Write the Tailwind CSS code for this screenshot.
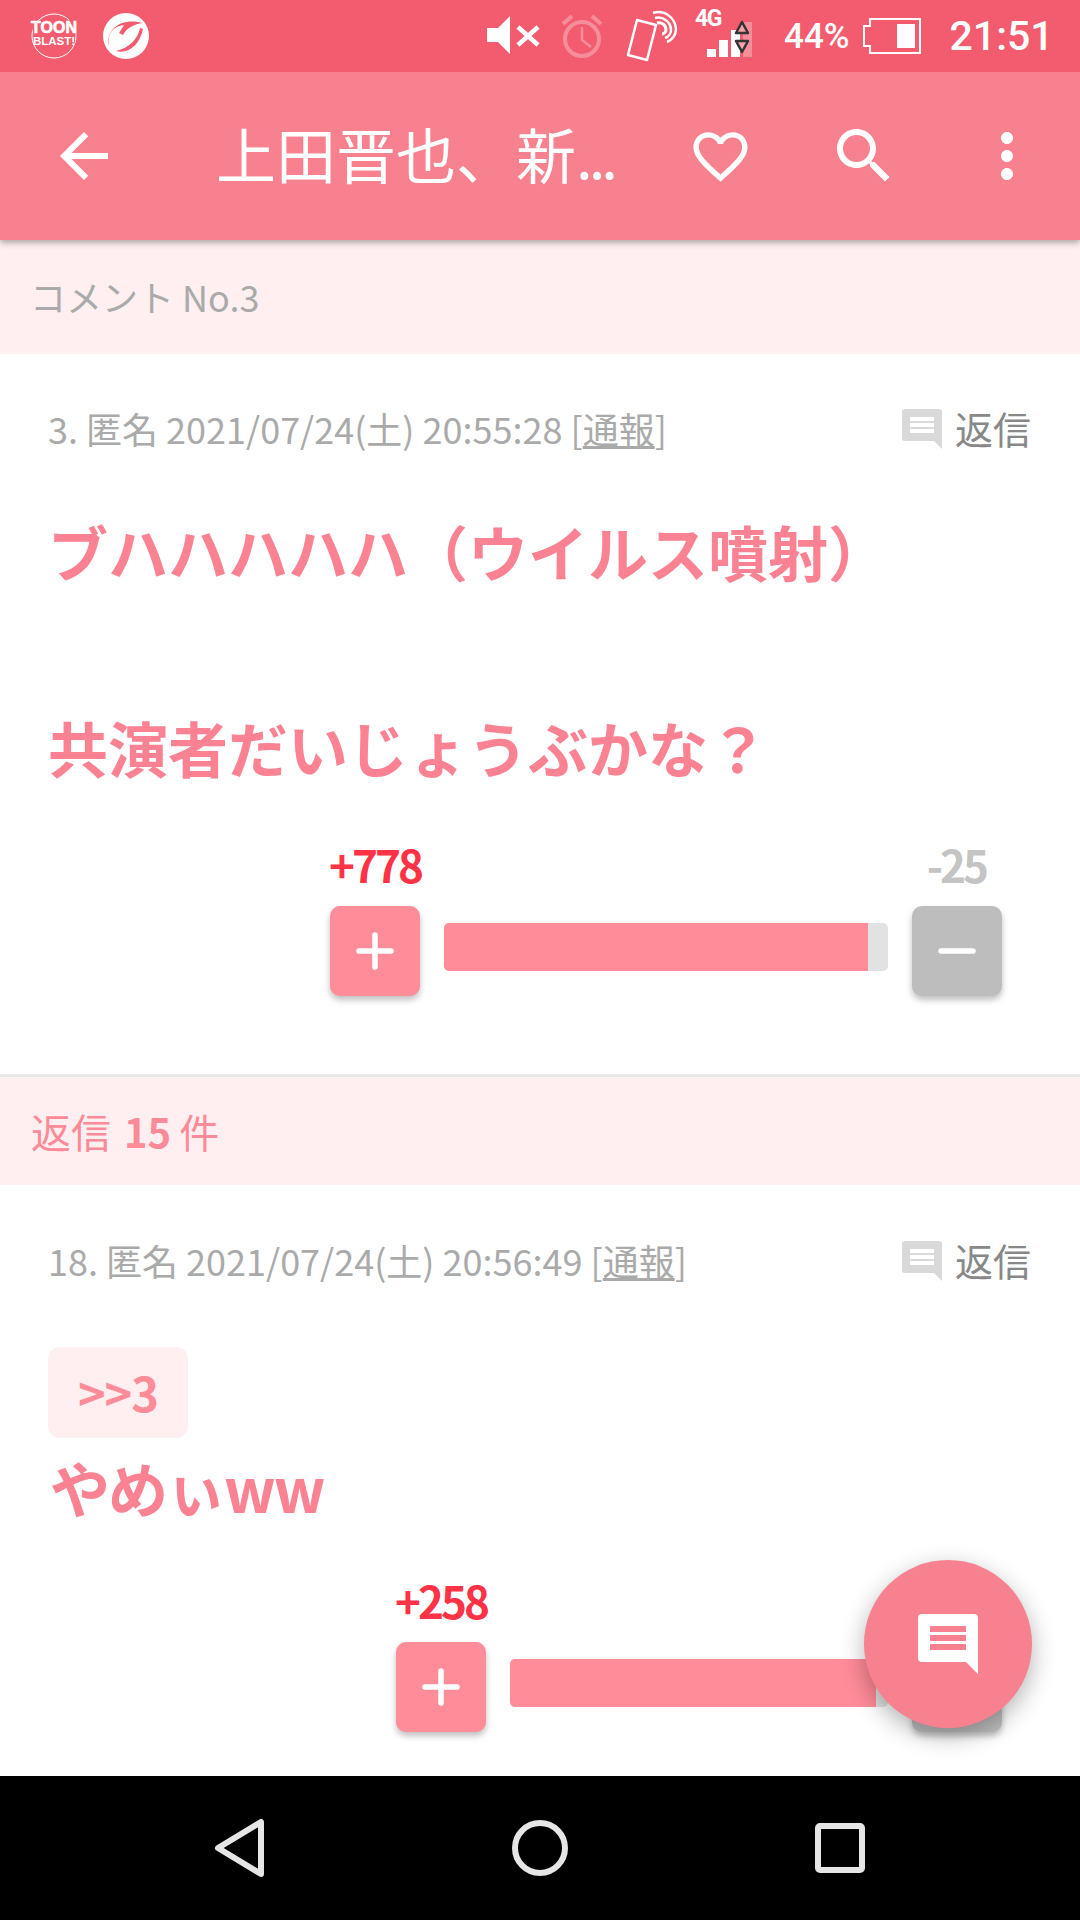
<!DOCTYPE html>
<html lang="ja">
<head>
<meta charset="utf-8">
<script src="https://cdn.jsdelivr.net/npm/@tailwindcss/browser@4"></script>
</head>
<body class="bg-white">
<div class="relative w-[1080px] h-[1920px] overflow-hidden flex flex-col bg-white font-['Noto_Sans_CJK_JP','Noto_Sans',sans-serif]">
  <!-- status bar -->
  <div class="h-[72px] shrink-0 bg-[#f25c6e] flex items-center text-white relative z-20">
    <svg class="ml-[30px] w-[48px] h-[48px]" viewBox="0 0 48 48"><circle cx="24" cy="24" r="22" fill="none" stroke="#fff" stroke-width="1"/><path d="M1 9 L46 8 L45 27 L44 33 L5 33 L3 20Z" fill="#f25c6e"/><text x="24" y="21" text-anchor="middle" font-family="Liberation Sans" font-weight="700" font-size="16" stroke="#fff" stroke-width="0.6" fill="#fff">TOON</text><text x="24" y="33" text-anchor="middle" font-family="Liberation Sans" font-weight="700" font-size="11.5" fill="#fff">BLAST!</text></svg>
    <svg class="ml-[24px] w-[48px] h-[48px]" viewBox="0 0 48 48"><circle cx="24" cy="24" r="23" fill="#fff"/><path d="M7 34 C5 22 11 14 22 13 L17 21 L21 23 C24 17 31 12 41 11 C31 8 18 9 11 17 C7 22 5 28 7 34Z" fill="#f25c6e"/><path d="M14 39 C25 42 37 35 41 17 L38 16 C36 27 27 36 14 39Z" fill="#f25c6e"/></svg>
    <svg class="ml-[337px] w-[54px] h-[40px]" viewBox="0 0 54 40"><path d="M0 12 H11 L23 0 V38 L11 26 H0Z" fill="#fff"/><path d="M31 11 L51 29 M51 11 L31 29" stroke="#fff" stroke-width="4.5"/></svg>
    <svg class="ml-[20px] w-[42px] h-[44px] opacity-30" viewBox="0 0 42 44"><circle cx="21" cy="25" r="17" fill="none" stroke="#fff" stroke-width="4"/><path d="M21 13 V26 L30 33" fill="none" stroke="#fff" stroke-width="2.5"/><path d="M2 10 L11 2 M40 10 L31 2" stroke="#fff" stroke-width="4"/></svg>
    <svg class="ml-[23px] w-[52px] h-[52px]" viewBox="0 0 52 52"><path d="M11 10 L30 15 L21 50 L2 45Z" fill="none" stroke="#fff" stroke-width="2.5" stroke-linejoin="round"/><path d="M27 3 C39 -1 49 8 50 19 C50 25 46 30 41 32" fill="none" stroke="#fff" stroke-width="2.5"/><path d="M29 8 C37 6 45 12 45 20 C45 24 42 27 39 28" fill="none" stroke="#fff" stroke-width="2.5"/><path d="M31 13 C36 12 40 15 40 20 C40 22 38 24 36 24" fill="none" stroke="#fff" stroke-width="3"/></svg>
    <div class="relative ml-[17px] w-[58px] h-[44px] mt-[-2px]">
      <span class="absolute left-0 top-[-7px] font-['Roboto'] font-bold text-[23px] leading-[26px] tracking-[-1.5px]">4G</span>
      <div class="absolute left-[12px] bottom-0 flex items-end gap-[3px]">
        <div class="w-[9px] h-[8px] bg-white"></div>
        <div class="w-[9px] h-[17px] bg-white"></div>
        <div class="w-[9px] h-[27px] bg-white"></div>
        <div class="w-[9px] h-[35px] bg-white/30"></div>
      </div>
      <svg class="absolute left-[39px] top-[7px] w-[16px] h-[34px]" viewBox="0 0 16 34"><path d="M8 2 L14 13 H2Z M8 32 L14 21 H2Z" fill="#f6a0aa" stroke="#333" stroke-width="2.5" stroke-linejoin="round"/></svg>
    </div>
    <span class="ml-[31px] font-['Roboto'] font-medium text-[35px] leading-none">44%</span>
    <svg class="ml-[13px] w-[58px] h-[36px]" viewBox="0 0 58 36"><path d="M7 1 H57 V35 H7 V28 H1 V8 H7Z" fill="none" stroke="#fff" stroke-width="2"/><rect x="34" y="6" width="18" height="24" fill="#fff"/></svg>
    <span class="ml-[29px] font-['Roboto'] font-medium text-[41px] leading-none">21:51</span>
  </div>
  <!-- toolbar -->
  <div class="h-[168px] shrink-0 bg-[#f8818f] flex items-center text-white relative z-10 shadow-[0_3px_6px_rgba(0,0,0,0.3)]">
    <svg class="ml-[48px] w-[72px] h-[72px]" viewBox="0 0 24 24" fill="#fff"><path d="M20 11H7.83l5.59-5.59L12 4l-8 8 8 8 1.41-1.41L7.83 13H20v-2z"/></svg>
    <div class="ml-[96px] w-[472px] mt-[-6px] text-[60px] leading-[72px] font-normal whitespace-nowrap">上田晋也、新<span class="tracking-[-4px]">...</span></div>
    <svg class="w-[65px] h-[65px]" viewBox="0 0 24 24" fill="#fff"><path d="M16.5 3c-1.74 0-3.41.81-4.5 2.09C10.91 3.81 9.24 3 7.5 3 4.42 3 2 5.42 2 8.5c0 3.78 3.4 6.86 8.55 11.54L12 21.35l1.45-1.32C18.6 15.36 22 12.28 22 8.5 22 5.42 19.58 3 16.5 3zm-4.4 15.55l-.1.1-.1-.1C7.14 14.24 4 11.39 4 8.5 4 6.5 5.5 5 7.5 5c1.54 0 3.04.99 3.57 2.36h1.87C13.46 5.99 14.96 5 16.5 5c2 0 3.5 1.5 3.5 3.5 0 2.89-3.14 5.74-7.9 10.05z"/></svg>
    <svg class="ml-[75px] w-[72px] h-[72px]" viewBox="0 0 24 24" fill="#fff"><path d="M15.5 14h-.79l-.28-.27C15.41 12.59 16 11.11 16 9.5 16 5.91 13.09 3 9.5 3S3 5.91 3 9.5 5.91 16 9.5 16c1.61 0 3.09-.59 4.23-1.57l.27.28v.79l5 4.99L20.49 19l-4.99-5zm-6 0C7.01 14 5 11.99 5 9.5S7.01 5 9.5 5 14 7.01 14 9.5 11.99 14 9.5 14z"/></svg>
    <svg class="ml-[71px] w-[72px] h-[72px]" viewBox="0 0 24 24" fill="#fff"><path d="M12 8c1.1 0 2-.9 2-2s-.9-2-2-2-2 .9-2 2 .9 2 2 2zm0 2c-1.1 0-2 .9-2 2s.9 2 2 2 2-.9 2-2-.9-2-2-2zm0 6c-1.1 0-2 .9-2 2s.9 2 2 2 2-.9 2-2-.9-2-2-2z"/></svg>
  </div>
  <!-- content -->
  <div class="flex-1 flex flex-col overflow-hidden">
    <div class="h-[114px] shrink-0 bg-[#ffeff0] flex items-center pl-[30px] pb-[2px] text-[36px] text-[#aaaaaa]">コメント No.3</div>
    <!-- comment 1 -->
    <div class="h-[723px] shrink-0 border-b-[3px] border-[#e8e8e8] flex flex-col">
      <div class="mt-[50px] h-[50px] flex items-center justify-between pl-[48px] pr-[49px]">
        <div class="text-[36px] text-[#aaaaaa] whitespace-nowrap mt-[-2px]">3. 匿名 2021/07/24(土) 20:55:28 [<span class="underline">通報</span>]</div>
        <div class="flex items-center gap-[13px] text-[38px] text-[#888888] mt-[-4px]">
          <svg class="w-[40px] h-[40px] mt-[4px]" viewBox="0 0 60 60"><path d="M4 0 H56 A4 4 0 0 1 60 4 V60 L48 48 H4 A4 4 0 0 1 0 44 V4 A4 4 0 0 1 4 0Z" fill="#d9d9d9"/><path d="M12 12 H48 V18 H12Z M12 21 H48 V27 H12Z M12 30 H48 V36 H12Z" fill="#fff"/></svg>
          <span>返信</span>
        </div>
      </div>
      <div class="mt-[48px] pl-[48px] text-[60px] leading-[98px] font-bold text-[#fa8292] whitespace-nowrap">
        <p>ブハハハハハ（ウイルス噴射）</p>
        <p class="h-[98px]"></p>
        <p>共演者だいじょうぶかな？</p>
      </div>
      <div class="ml-[329px] mt-[40px] w-[673px]">
        <div class="flex justify-between h-[70px] text-[44px] leading-[56px] font-bold tracking-[-3px]">
          <span class="text-[#ff3246]">+778</span>
          <span class="text-[#c4c4c4] mr-[16px]">-25</span>
        </div>
        <div class="flex items-start gap-[24px] pl-[1px]">
          <div class="w-[90px] h-[90px] shrink-0 rounded-[10px] bg-[#ff8c99] shadow-[0_4px_6px_rgba(0,0,0,0.25)] flex items-center justify-center">
            <svg class="w-[38px] h-[38px]" viewBox="0 0 38 38"><path d="M3 19 H35 M19 3 V35" stroke="#fff" stroke-width="5.5" stroke-linecap="round"/></svg>
          </div>
          <div class="flex-1 mt-[17px] h-[48px] rounded-[5px] bg-[#e2e2e2] overflow-hidden"><div class="h-full bg-[#ff8c99]" style="width:95.5%"></div></div>
          <div class="w-[90px] h-[90px] shrink-0 rounded-[10px] bg-[#bdbdbd] shadow-[0_4px_6px_rgba(0,0,0,0.25)] flex items-center justify-center">
            <svg class="w-[38px] h-[38px]" viewBox="0 0 38 38"><path d="M3 19 H35" stroke="#fff" stroke-width="5.5" stroke-linecap="round"/></svg>
          </div>
        </div>
      </div>
    </div>
    <div class="h-[108px] shrink-0 bg-[#ffeff0] flex items-center pl-[31px] text-[40px] text-[#fb8b98]">返信<b class="font-bold ml-[13px] mr-[8px]">15</b>件</div>
    <!-- comment 2 -->
    <div class="flex-1 flex flex-col">
      <div class="mt-[51px] h-[50px] flex items-center justify-between pl-[48px] pr-[49px]">
        <div class="text-[36px] text-[#aaaaaa] whitespace-nowrap mt-[-2px]">18. 匿名 2021/07/24(土) 20:56:49 [<span class="underline">通報</span>]</div>
        <div class="flex items-center gap-[13px] text-[38px] text-[#888888] mt-[-4px]">
          <svg class="w-[40px] h-[40px] mt-[4px]" viewBox="0 0 60 60"><path d="M4 0 H56 A4 4 0 0 1 60 4 V60 L48 48 H4 A4 4 0 0 1 0 44 V4 A4 4 0 0 1 4 0Z" fill="#d9d9d9"/><path d="M12 12 H48 V18 H12Z M12 21 H48 V27 H12Z M12 30 H48 V36 H12Z" fill="#fff"/></svg>
          <span>返信</span>
        </div>
      </div>
      <div class="ml-[48px] mt-[61px] w-[140px] h-[91px] rounded-[12px] bg-[#ffeff0] flex items-center justify-center text-[47px] font-bold tracking-[-1px] text-[#ff8c99]">&gt;&gt;3</div>
      <div class="pl-[50px] h-[98px] text-[60px] leading-[98px] font-bold tracking-[-2px] text-[#fa8292] whitespace-nowrap">やめぃww</div>
      <div class="ml-[395px] mt-[36px] w-[607px]">
        <div class="h-[70px] text-[44px] leading-[56px] font-bold tracking-[-3px] text-[#ff3246]">+258</div>
        <div class="flex items-start gap-[24px] pl-[1px]">
          <div class="w-[90px] h-[90px] shrink-0 rounded-[10px] bg-[#ff8c99] shadow-[0_4px_6px_rgba(0,0,0,0.25)] flex items-center justify-center">
            <svg class="w-[38px] h-[38px]" viewBox="0 0 38 38"><path d="M3 19 H35 M19 3 V35" stroke="#fff" stroke-width="5.5" stroke-linecap="round"/></svg>
          </div>
          <div class="flex-1 mt-[17px] h-[48px] rounded-[5px] bg-[#e2e2e2] overflow-hidden"><div class="h-full bg-[#ff8c99]" style="width:96.8%"></div></div>
          <div class="w-[90px] h-[90px] shrink-0 rounded-[10px] bg-[#bdbdbd] shadow-[0_4px_6px_rgba(0,0,0,0.25)]"></div>
        </div>
      </div>
    </div>
  </div>
  <!-- nav -->
  <div class="h-[144px] shrink-0 bg-black flex items-center relative z-20">
    <svg class="ml-[214px] w-[52px] h-[60px]" viewBox="0 0 52 60"><path d="M47 4 V56 L4 30Z" fill="none" stroke="#e6e6e6" stroke-width="6" stroke-linejoin="round"/></svg>
    <svg class="ml-[246px] w-[56px] h-[56px]" viewBox="0 0 56 56"><circle cx="28" cy="28" r="25" fill="none" stroke="#e6e6e6" stroke-width="6"/></svg>
    <svg class="ml-[247px] w-[50px] h-[50px]" viewBox="0 0 50 50"><rect x="3" y="3" width="44" height="44" rx="2" fill="none" stroke="#e6e6e6" stroke-width="6"/></svg>
  </div>
  <!-- FAB -->
  <div class="absolute left-[864px] top-[1560px] w-[168px] h-[168px] rounded-full bg-[#f8818f] shadow-[0_8px_24px_rgba(0,0,0,0.3)] flex items-center justify-center z-10">
    <svg class="w-[60px] h-[60px]" viewBox="0 0 60 60"><path d="M4 0 H56 A4 4 0 0 1 60 4 V60 L48 48 H4 A4 4 0 0 1 0 44 V4 A4 4 0 0 1 4 0Z" fill="#fff"/><path d="M12 12 H48 V18 H12Z M12 21 H48 V27 H12Z M12 30 H48 V36 H12Z" fill="#f8818f"/></svg>
  </div>
</div>
</body>
</html>
